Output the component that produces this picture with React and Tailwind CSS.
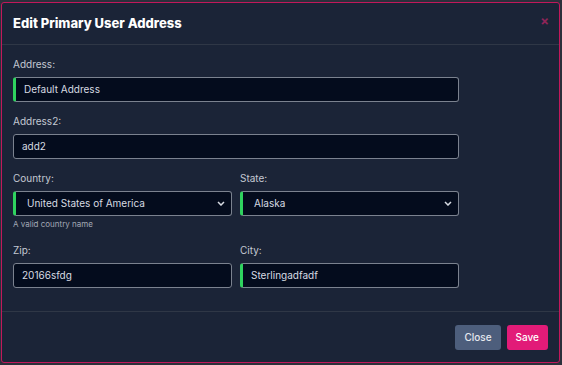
import React from 'react';

const Label = ({ children }) => (
  <label className="block text-[10px] leading-none text-[#c3c8d2] mb-[8px]">{children}</label>
);

const Field = ({ value, valid }) => (
  <div
    className={`h-[25px] rounded-[3px] border border-[#7b828f] bg-[#040c1d] flex items-center text-[10px] text-[#d7dbe2] ${
      valid ? 'border-l-[3px] border-l-[#2fd35f] pl-[8px]' : 'pl-[8px]'
    }`}
  >
    {value}
  </div>
);

const Select = ({ value }) => (
  <div className="h-[25px] rounded-[3px] border border-[#7b828f] border-l-[3px] border-l-[#2fd35f] bg-[#040c1d] flex items-center justify-between pl-[11px] pr-[6px] text-[10px] text-[#d7dbe2]">
    <span>{value}</span>
    <svg width="8" height="5" viewBox="0 0 8 5" fill="none">
      <path d="M1 1l3 3 3-3" stroke="#d7dbe2" strokeWidth="1.5" />
    </svg>
  </div>
);

export default function App() {
  return (
    <div className="w-[562px] h-[365px] bg-[#2b303b] overflow-hidden" style={{ fontFamily: 'Inter, "Noto Sans", sans-serif' }}>
      <div className="ml-[1px] mt-[2px] w-[559px] h-[361px] bg-[#1b2437] border border-[#c2185b] rounded-[3px] flex flex-col">
        {/* header */}
        <div className="h-[42px] shrink-0 flex items-center justify-between pl-[11px] pr-[10px] border-b border-[#2f3746]">
          <h2 className="text-[13px] font-extrabold text-white">Edit Primary User Address</h2>
          <span className="text-[#8d2458] text-[13px] font-bold leading-none -mt-[4px]">×</span>
        </div>

        {/* body */}
        <div className="pl-[11px] pt-[14px] flex-1 border-b border-[#2f3746]">
          <div className="w-[446px]">
            <Label>Address:</Label>
            <Field value="Default Address" valid />
            <div className="mt-[14px]">
              <Label>Address2:</Label>
              <Field value="add2" />
            </div>
            <div className="mt-[14px] grid grid-cols-2 gap-[8px]">
              <div>
                <Label>Country:</Label>
                <Select value="United States of America" />
                <p className="text-[8px] text-[#a3a9b5] mt-[4px] leading-none">A valid country name</p>
              </div>
              <div>
                <Label>State:</Label>
                <Select value="Alaska" />
              </div>
            </div>
            <div className="mt-[17px] grid grid-cols-2 gap-[8px]">
              <div>
                <Label>Zip:</Label>
                <Field value="20166sfdg" />
              </div>
              <div>
                <Label>City:</Label>
                <Field value="Sterlingadfadf" valid />
              </div>
            </div>
          </div>
        </div>

        {/* footer */}
        <div className="h-[50px] shrink-0 flex items-center justify-end gap-[6px] pr-[11px]">
          <button className="h-[25px] px-[9px] rounded-[3px] bg-[#4d5e7c] text-[10px] font-medium text-[#e6e9ef]">Close</button>
          <button className="h-[25px] px-[9px] rounded-[3px] bg-[#e21b78] text-[10px] font-medium text-white">Save</button>
        </div>
      </div>
    </div>
  );
}
